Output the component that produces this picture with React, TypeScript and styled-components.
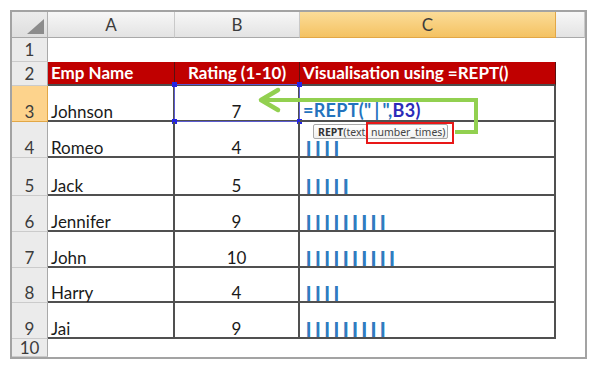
import styled, { createGlobalStyle } from 'styled-components';

const GlobalStyle = createGlobalStyle`
  html, body {
    margin: 0;
    padding: 0;
    background: #ffffff;
  }
  body {
    font-family: Lato, "Noto Sans", sans-serif;
  }
`

const Page = styled.div`
  position: relative;
  width: 600px;
  height: 368px;
  overflow: hidden;
  padding: 10px 0 0 10px;
  box-sizing: border-box;
`

const Frame = styled.div`
  width: 577px;
  height: 349px;
  box-sizing: border-box;
  border: 2px solid #a3a3a3;
  overflow: hidden;
`

const Sheet = styled.div<{ $rows: string }>`
  display: grid;
  height: 100%;
  grid-template-columns: 36px 127px 125px 256px 1fr;
  grid-template-rows: ${p => p.$rows};
`

const Corner = styled.div`
  background: linear-gradient(#ececec, #dedede);
  border-right: 1px solid #b0b0b0;
  border-bottom: 1px solid #a6a6a6;
  display: flex;
  align-items: flex-end;
  justify-content: flex-end;
  padding: 0 3px 3px 0;
  box-sizing: border-box;
`

const ColHead = styled.div<{ $active?: boolean }>`
  display: flex;
  align-items: center;
  justify-content: center;
  box-sizing: border-box;
  font-size: 17px;
  color: #3c3c3c;
  background: ${p => p.$active
    ? 'linear-gradient(#fbdc98, #f4c262)'
    : 'linear-gradient(#f7f7f7, #e3e3e3)'};
  border-right: 1px solid ${p => (p.$active ? '#e2a746' : '#c9c9c9')};
  border-bottom: 1px solid ${p => (p.$active ? '#e2a746' : '#a9a9a9')};
`

const RowHead = styled.div<{ $active?: boolean; $center?: boolean; $drop?: number }>`
  display: flex;
  justify-content: center;
  align-items: ${p => (p.$center ? 'center' : 'flex-end')};
  padding-bottom: ${p => (p.$center ? 0 : p.$drop ?? 1)}px;
  box-sizing: border-box;
  font-size: 17px;
  line-height: 1;
  color: #3c3c3c;
  background: ${p => (p.$active ? '#fdd38c' : '#ebebeb')};
  border-right: 1px solid ${p => (p.$active ? '#e2a746' : '#a9a9a9')};
  border-bottom: 1px solid ${p => (p.$active ? '#e2a746' : '#cbcbcb')};
`

const Blank = styled.div`
  background: #ffffff;
`

const Head = styled.div<{ $align?: string }>`
  display: flex;
  align-items: flex-end;
  justify-content: ${p => p.$align || 'flex-start'};
  padding: 0 3px 3px;
  box-sizing: border-box;
  background: #c00000;
  color: #ffffff;
  font-weight: 700;
  font-size: 17px;
  line-height: 1;
  white-space: nowrap;
  border-right: 1px solid #5a1010;
  border-bottom: 2px solid #4d4d4d;
`

const Cell = styled.div<{ $align?: string }>`
  position: relative;
  display: flex;
  align-items: flex-end;
  justify-content: ${p => p.$align || 'flex-start'};
  padding: 0 3px 0;
  box-sizing: border-box;
  font-size: 17px;
  line-height: 1;
  color: #1a1a1a;
  white-space: nowrap;
  border-right: 2px solid #505050;
  border-bottom: 2px solid #505050;
`

const Bars = styled.span`
  font-family: "Liberation Sans", Arial, sans-serif;
  font-weight: 700;
  font-size: 17px;
  letter-spacing: 4.5px;
  color: #2f7cc0;
  line-height: 19px;
  padding-left: 3px;
  margin-bottom: -1px;
  text-shadow: 0.6px 0 0 #2f7cc0;
`

const Formula = styled.span`
  font-weight: 700;
  font-size: 18px;
  letter-spacing: 0.3px;
  color: #2373bd;
  margin-bottom: 1px;
`

const Pipe = styled.span`
  padding: 0 3px;
`

const Ref = styled.span`
  color: #2b2bb8;
`

const Selection = styled.div`
  position: absolute;
  left: -1px;
  top: -2px;
  right: -2px;
  bottom: -2px;
  border: 1px solid #5b5bd0;
  pointer-events: none;
`

const Handle = styled.span<{ $x: 'l' | 'r'; $y: 't' | 'b' }>`
  position: absolute;
  width: 5px;
  height: 5px;
  background: #2424e6;
  ${p => (p.$x === 'l' ? 'left: -3px;' : 'right: -3px;')}
  ${p => (p.$y === 't' ? 'top: -3px;' : 'bottom: -3px;')}
`

const Tip = styled.div`
  position: absolute;
  left: 313px;
  top: 124px;
  width: 135px;
  height: 15px;
  box-sizing: border-box;
  display: flex;
  align-items: center;
  padding: 0 4px;
  background: linear-gradient(#ffffff, #f0f0f0);
  border: 1px solid #a8a8a8;
  border-radius: 2px;
  font-family: "Noto Sans", sans-serif;
  font-size: 10.5px;
  color: #444444;
  white-space: nowrap;
`

const TipName = styled.b`
  font-weight: 700;
  color: #333333;
`

const RedBox = styled.div`
  position: absolute;
  left: 366px;
  top: 122px;
  width: 88px;
  height: 22px;
  box-sizing: border-box;
  border: 2px solid #e81818;
`

const Arrow = styled.svg`
  position: absolute;
  left: 0;
  top: 0;
  pointer-events: none;
`

const people = [
  { n: 3, name: 'Johnson', rating: 7, h: 36 },
  { n: 4, name: 'Romeo', rating: 4, h: 36 },
  { n: 5, name: 'Jack', rating: 5, h: 38 },
  { n: 6, name: 'Jennifer', rating: 9, h: 36 },
  { n: 7, name: 'John', rating: 10, h: 36 },
  { n: 8, name: 'Harry', rating: 4, h: 35 },
  { n: 9, name: 'Jai', rating: 9, h: 36 },
]

const App = () => {
  const rows = ['26px', '24px', '24px', ...people.map(p => `${p.h}px`), '1fr'].join(' ')

  return (
    <>
      <GlobalStyle />
      <Page>
        <Frame>
          <Sheet $rows={rows}>
            <Corner>
              <svg width="17" height="15" viewBox="0 0 17 15">
                <polygon points="17,0 17,15 0,15" fill="#8c8c8c" />
              </svg>
            </Corner>
            <ColHead>A</ColHead>
            <ColHead>B</ColHead>
            <ColHead $active>C</ColHead>
            <ColHead />

            <RowHead $center>1</RowHead>
            <Blank />
            <Blank />
            <Blank />
            <Blank />

            <RowHead $drop={3}>2</RowHead>
            <Head>Emp Name</Head>
            <Head $align="center">Rating (1-10)</Head>
            <Head>Visualisation using =REPT()</Head>
            <Blank />

            {people.map(p => (
              <>
                <RowHead key={`h${p.n}`} $active={p.n === 3}>{p.n}</RowHead>
                <Cell key={`a${p.n}`}>{p.name}</Cell>
                <Cell key={`b${p.n}`} $align="center">
                  {p.rating}
                  {p.n === 3 && (
                    <Selection>
                      <Handle $x="l" $y="t" />
                      <Handle $x="r" $y="t" />
                      <Handle $x="l" $y="b" />
                      <Handle $x="r" $y="b" />
                    </Selection>
                  )}
                </Cell>
                <Cell key={`c${p.n}`}>
                  {p.n === 3 ? (
                    <Formula>=REPT("<Pipe>|</Pipe>",<Ref>B3)</Ref></Formula>
                  ) : (
                    <Bars>{'|'.repeat(p.rating)}</Bars>
                  )}
                </Cell>
                <Blank key={`d${p.n}`} />
              </>
            ))}

            <RowHead $center>10</RowHead>
            <Blank />
            <Blank />
            <Blank />
            <Blank />
          </Sheet>
        </Frame>

        <Tip>
          <TipName>REPT</TipName>(text, number_times)
        </Tip>
        <RedBox />

        {/* green callout arrow */}
        <Arrow width="600" height="368" viewBox="0 0 600 368">
          <path d="M262 100 H476 V132 H455" fill="none" stroke="#92d050" strokeWidth="4" strokeLinejoin="miter" />
          <path d="M278 90 L261 100 L278 110" fill="none" stroke="#92d050" strokeWidth="4.5" strokeLinecap="round" strokeLinejoin="round" />
        </Arrow>
      </Page>
    </>
  );
};

export default App;
